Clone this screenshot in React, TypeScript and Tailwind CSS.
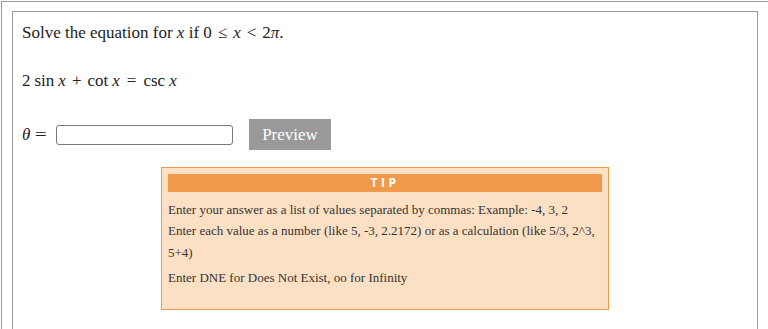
import React from 'react'

function X({ className = '' }: { className?: string }) {
  return <i className={`inline-block ${className}`}>x</i>
}

export default function App() {
  return (
    <div className="h-[329px] overflow-hidden bg-white font-['Liberation_Serif',serif] text-[#222]">
      <div className="ml-px mt-px h-[340px] border-l border-t border-[#9a9a9a] pl-[10px] pr-[10px] pt-[9px]">
        <div className="h-full border border-b-0 border-[#9a9a9a] pl-[9px] pt-[9px]">
          <p className="text-[17px] leading-6">
            Solve the equation for <X /> if 0
            <span className="mx-[6px] inline-block">≤</span>
            <X />
            <span className="mx-[6px] inline-block">&lt;</span>
            2<i>π</i>.
          </p>

          <p className="mt-6 text-[17px] leading-6">
            <span>2</span>
            <span className="ml-[4px] inline-block">sin</span>
            <X className="ml-[4px]" />
            <span className="mx-[6px] inline-block">+</span>
            <span className="inline-block">cot</span>
            <X className="ml-[4px]" />
            <span className="mx-[7px] inline-block">=</span>
            <span className="inline-block">csc</span>
            <X className="ml-[4px]" />
          </p>

          <div className="mt-[26px] flex h-[31px] items-center">
            <span className="flex w-[34px] text-[17px]">
              <i>θ</i>
              <span className="ml-[6px] inline-block scale-x-125">=</span>
            </span>
            <input
              type="text"
              className="h-5 w-[177px] rounded-[3px] border border-[#777] bg-white"
            />
            <button className="ml-4 h-[31px] w-[82px] bg-[#999] text-[17px] text-white">Preview</button>
          </div>

          <div className="ml-[139px] mt-[17px] h-[143px] w-[448px] border border-[#f0994a] bg-[#fce0c4] p-[6px]">
            <div className="flex h-[18px] items-center justify-center bg-[#f0994a] font-['Open_Sans',sans-serif] text-[12px] font-bold tracking-[3.5px] text-white">
              TIP
            </div>
            <div className="mt-[7px] text-[13px] leading-[21px] text-[#333]">
              <div>Enter your answer as a list of values separated by commas: Example: -4, 3, 2</div>
              <div className="leading-[22px]">
                Enter each value as a number (like 5, -3, 2.2172) or as a calculation (like 5/3, 2^3, 5+4)
              </div>
              <div className="mt-[3px]">Enter DNE for Does Not Exist, oo for Infinity</div>
            </div>
          </div>
        </div>
      </div>
    </div>
  )
}
